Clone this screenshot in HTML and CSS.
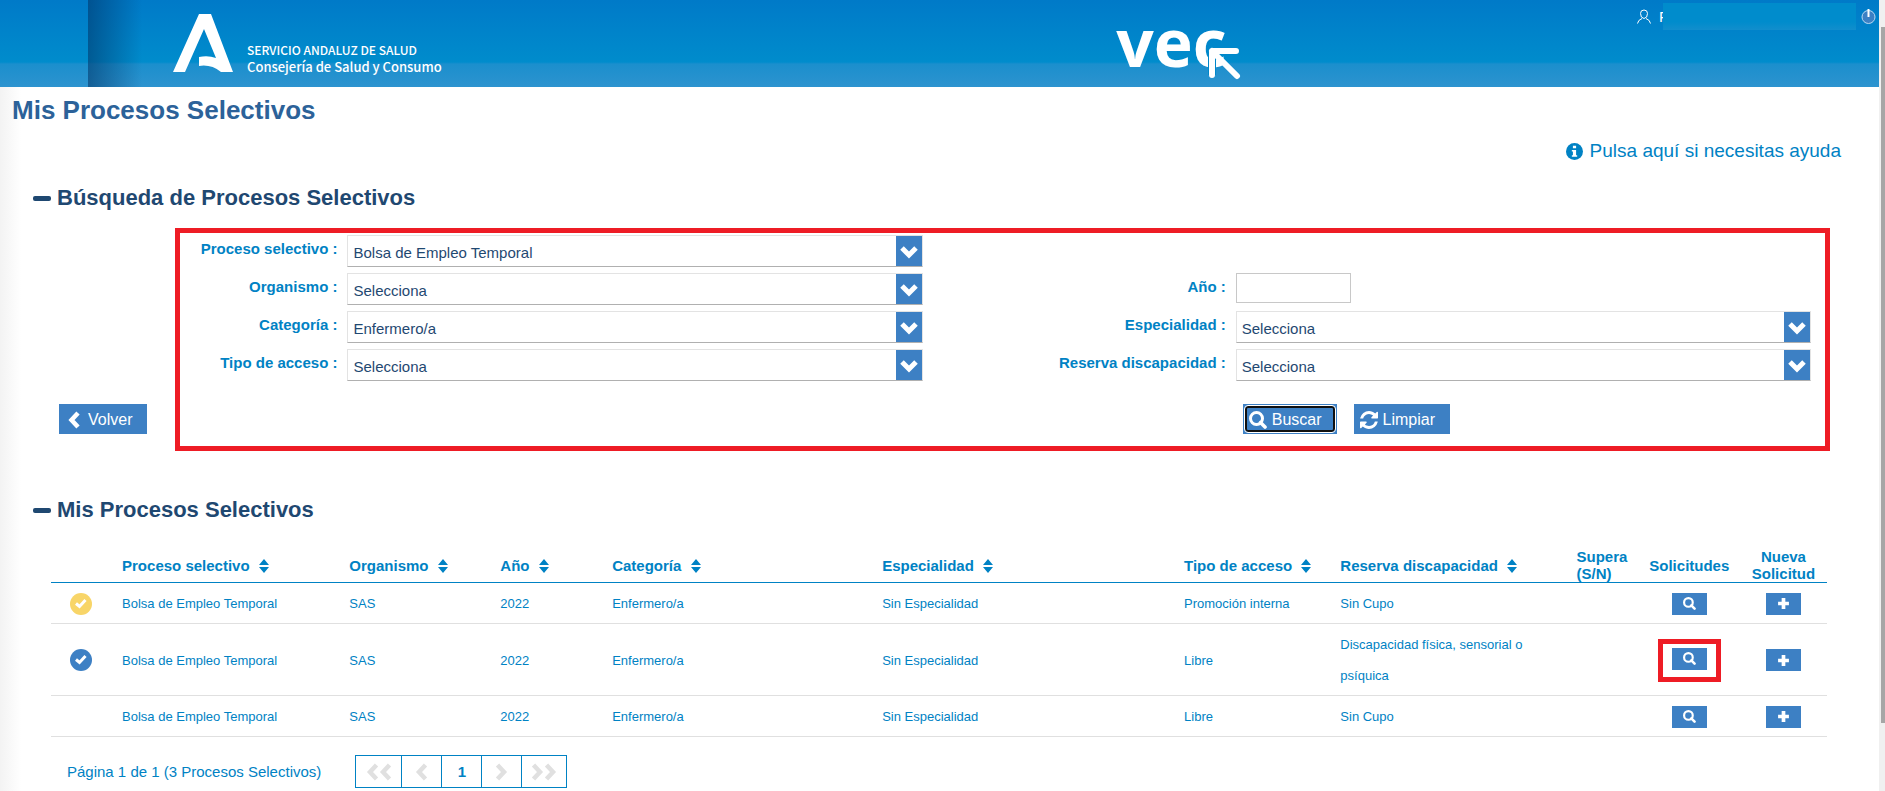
FILE: index.html
```html
<!DOCTYPE html>

<html lang="es">

<head>
  <meta charset="UTF-8">
  <meta name="viewport" content="width=device-width,initial-scale=1">
  <title>Mis Procesos Selectivos</title>
  <link rel="stylesheet" href="styles.css">
</head>
<body>
  <svg class="sprite" width="0" height="0">
    <symbol id="chevron-left" viewBox="0 0 12 18">
      <path d="M10 2 L3.500 9 L10 16" fill="none" stroke="currentColor" stroke-width="4.500"/>
    </symbol>
    <symbol id="chevron-right" viewBox="0 0 12 18">
      <path d="M2 2 L8.500 9 L2 16" fill="none" stroke="currentColor" stroke-width="4.500"/>
    </symbol>
    <symbol id="search" viewBox="0 0 18 18">
      <circle cx="7.500" cy="7.500" r="6" fill="none" stroke="currentColor" stroke-width="3"/>
      <path d="M11.500 11.500 L16 16" stroke="currentColor" stroke-width="3.600" stroke-linecap="round"/>
    </symbol>
    <symbol id="refresh" viewBox="0 0 1536 1536">
      <path fill="currentColor" d="M1511 928q0 5-1 7-64 268-268 434.500T764 1536q-146 0-282.500-55T238 1324l-129 129q-19 19-45 19t-45-19-19-45V960q0-26 19-45t45-19h448q26 0 45 19t19 45-19 45l-137 137q71 66 161 102t187 36q134 0 250-65t186-179q11-17 53-117 8-23 30-23h192q13 0 22.500 9.500t9.500 22.500zM1536 128v448q0 26-19 45t-45 19h-448q-26 0-45-19t-19-45 19-45l138-138Q969 256 768 256q-134 0-250 65T332 500q-11 17-53 117-8 23-30 23H50q-13 0-22.500-9.500T18 608v-7q65-268 270-434.500T768 0q146 0 284 55.500T1297 212l130-129q19-19 45-19t45 19 19 45z"/>
    </symbol>
    <symbol id="plus" viewBox="0 0 12 12">
      <path d="M6 1 V11 M1 6 H11" stroke="currentColor" stroke-width="3.400"/>
    </symbol>
    <symbol id="sort" viewBox="0 0 10 14">
      <path d="M5 0 L10 6 H0 Z M0 8 H10 L5 14 Z" fill="currentColor"/>
    </symbol>
    <symbol id="check" viewBox="0 0 22 22">
      <circle cx="11" cy="11" r="11" fill="currentColor"/>
      <path d="M6 10.500 L9.500 13.500 L15.500 7" fill="none" stroke="#fff" stroke-width="3"/>
    </symbol>
  </svg>

  <header class="header">
    <a class="brand" href="#">
      <svg class="brand-logo" viewBox="0 0 60 58">
        <path fill="#fff" d="M26 0 H38 L60 58 H48 Q38 50 26 52 V43 Q35 41 43 44 L31 15 L12 58 H0 Z"/>
      </svg>
      <span class="brand-text">
        <span class="brand-service">SERVICIO ANDALUZ DE SALUD</span>
        <span class="brand-council">Consejería de Salud y Consumo</span>
      </span>
    </a>
    <a class="vec" href="#">vec<svg class="vec-arrow" viewBox="0 0 34 34">
        <path d="M4 28 V4 H28" fill="none" stroke="#0087ca" stroke-width="8" stroke-linejoin="round"/>
        <path d="M4 28 V4 H28 M4 4 L29 29" fill="none" stroke="#fff" stroke-width="6" stroke-linecap="round" stroke-linejoin="round"/>
      </svg></a>
    <div class="user">
      <svg class="user-icon" viewBox="0 0 14 15" fill="none" stroke="#fff">
        <path d="M3.500 4.500 Q3.500 1 7 1 T10.500 4.500 Q10.500 9 7 9.500 Q3.500 9 3.500 4.500 Z M5 9.500 Q1 11 0.500 14.500 M9 9.500 Q13 11 13.500 14.500"/>
      </svg>
      <span class="user-name">F</span>
      <button class="power" type="button" aria-label="Salir">
        <svg viewBox="0 0 15 15" fill="none" stroke="#b9d9f2">
          <circle cx="7.500" cy="8" r="6.500" fill="#3d80c4"/>
          <path d="M7.500 0 V8" stroke="#fff" stroke-width="2"/>
        </svg>
      </button>
    </div>
  </header>

  <main class="main">
    <h1>Mis Procesos Selectivos</h1>
    <a class="help" href="#">
      <svg viewBox="0 0 16 16">
        <circle cx="8" cy="8" r="8" fill="currentColor"/>
        <path fill="#fff" d="M6.500 2.500 H9.500 V5 H6.500 Z M5.500 6.500 H9.500 V11.500 H10.500 V13 H5.500 V11.500 H6.500 V8 H5.500 Z"/>
      </svg>
      Pulsa aquí si necesitas ayuda
    </a>

    <section>
      <h2>Búsqueda de Procesos Selectivos</h2>
      <form class="search">
        <button class="btn back" type="button"><svg><use href="#chevron-left"/></svg>Volver</button>
        <div class="filters">
          <div class="fields">
            <label for="proceso">Proceso selectivo :</label>
            <select id="proceso"><option>Bolsa de Empleo Temporal</option></select>
            <span class="empty"></span>
            <label for="organismo">Organismo :</label>
            <select id="organismo"><option>Selecciona</option></select>
            <label for="anio">Año :</label>
            <input id="anio" type="text">
            <label for="categoria">Categoría :</label>
            <select id="categoria"><option>Enfermero/a</option></select>
            <label for="especialidad">Especialidad :</label>
            <select id="especialidad"><option>Selecciona</option></select>
            <label for="acceso">Tipo de acceso :</label>
            <select id="acceso"><option>Selecciona</option></select>
            <label for="reserva">Reserva discapacidad :</label>
            <select id="reserva"><option>Selecciona</option></select>
          </div>
          <div class="actions">
            <button class="btn btn-active" type="button"><svg><use href="#search"/></svg>Buscar</button>
            <button class="btn" type="button"><svg><use href="#refresh"/></svg>Limpiar</button>
          </div>
        </div>
      </form>
    </section>

    <section class="results">
      <h2>Mis Procesos Selectivos</h2>
      <table>
        <colgroup>
          <col class="c-state"><col class="c-process"><col class="c-org"><col class="c-year"><col class="c-cat">
          <col class="c-spec"><col class="c-access"><col class="c-reserve"><col class="c-pass"><col class="c-req"><col class="c-new">
        </colgroup>
        <thead>
          <tr>
            <th></th>
            <th>Proceso selectivo <svg><use href="#sort"/></svg></th>
            <th>Organismo <svg><use href="#sort"/></svg></th>
            <th>Año <svg><use href="#sort"/></svg></th>
            <th>Categoría <svg><use href="#sort"/></svg></th>
            <th>Especialidad <svg><use href="#sort"/></svg></th>
            <th>Tipo de acceso <svg><use href="#sort"/></svg></th>
            <th>Reserva discapacidad <svg><use href="#sort"/></svg></th>
            <th>Supera<br>(S/N)</th>
            <th class="center">Solicitudes</th>
            <th class="center">Nueva<br>Solicitud</th>
          </tr>
        </thead>
        <tbody>
          <tr>
            <td class="state-cell"><svg class="state state-pending"><use href="#check"/></svg></td>
            <td>Bolsa de Empleo Temporal</td>
            <td>SAS</td>
            <td>2022</td>
            <td>Enfermero/a</td>
            <td>Sin Especialidad</td>
            <td>Promoción interna</td>
            <td>Sin Cupo</td>
            <td></td>
            <td class="center"><button class="mini" type="button" aria-label="Ver solicitudes"><svg><use href="#search"/></svg></button></td>
            <td class="center"><button class="mini" type="button" aria-label="Nueva solicitud"><svg><use href="#plus"/></svg></button></td>
          </tr>
          <tr>
            <td class="state-cell"><svg class="state"><use href="#check"/></svg></td>
            <td>Bolsa de Empleo Temporal</td>
            <td>SAS</td>
            <td>2022</td>
            <td>Enfermero/a</td>
            <td>Sin Especialidad</td>
            <td>Libre</td>
            <td class="reserve-cell">Discapacidad física, sensorial o psíquica</td>
            <td></td>
            <td class="center"><span class="marked"><button class="mini" type="button" aria-label="Ver solicitudes"><svg><use href="#search"/></svg></button></span></td>
            <td class="center"><button class="mini" type="button" aria-label="Nueva solicitud"><svg><use href="#plus"/></svg></button></td>
          </tr>
          <tr>
            <td></td>
            <td>Bolsa de Empleo Temporal</td>
            <td>SAS</td>
            <td>2022</td>
            <td>Enfermero/a</td>
            <td>Sin Especialidad</td>
            <td>Libre</td>
            <td>Sin Cupo</td>
            <td></td>
            <td class="center"><button class="mini" type="button" aria-label="Ver solicitudes"><svg><use href="#search"/></svg></button></td>
            <td class="center"><button class="mini" type="button" aria-label="Nueva solicitud"><svg><use href="#plus"/></svg></button></td>
          </tr>
        </tbody>
      </table>
      <div class="pagination">
        <span>Página 1 de 1 (3 Procesos Selectivos)</span>
        <nav class="pages">
          <button class="wide" type="button" disabled aria-label="Primera"><svg><use href="#chevron-left"/></svg><svg><use href="#chevron-left"/></svg></button>
          <button type="button" disabled aria-label="Anterior"><svg><use href="#chevron-left"/></svg></button>
          <button type="button">1</button>
          <button type="button" disabled aria-label="Siguiente"><svg><use href="#chevron-right"/></svg></button>
          <button class="wide" type="button" disabled aria-label="Última"><svg><use href="#chevron-right"/></svg><svg><use href="#chevron-right"/></svg></button>
        </nav>
      </div>
    </section>
  </main>
  <div class="scrollbar"><div class="scrollbar-thumb"></div></div>
</body>
</html>
```

FILE: styles.css
```css
* {
  box-sizing: border-box;
}

html {
  overflow: hidden;
}

body {
  margin: 0;
  padding-right: 6px;
  min-height: 100vh;
  font-family: "Liberation Sans", Arial, sans-serif;
  font-size: 15px;
  color: #0082c4;
  background: #fff linear-gradient(to right, #f3f3f3, #fefefe 20px, #fff 21px);
}

button, input, select {
  font: inherit;
}

a {
  color: inherit;
  text-decoration: none;
}

.sprite {
  position: absolute;
}

/* header */
.header {
  display: grid;
  grid-template-columns: 59.4% 126px 1fr;
  height: 87px;
  color: #fff;
  background:
    linear-gradient(to right, rgba(0, 50, 100, .55), rgba(0, 80, 140, 0)) 88px 0 / 54px 100% no-repeat,
    linear-gradient(#007ac8, #008ccc 62px, #1b8fcd 64px, #2d93cf);
}

.brand {
  display: flex;
  gap: 14px;
  padding: 14px 0 0 173px;
}

.brand-logo {
  width: 60px;
  height: 58px;
}

.brand-text {
  display: flex;
  flex-direction: column;
  padding-top: 27px;
  font-family: "Noto Sans CJK JP", "Noto Sans", sans-serif;
  font-weight: 500;
  line-height: 17px;
}

.brand-service {
  font-size: 12px;
}

.brand-council {
  font-size: 13px;
}

.vec {
  position: relative;
  font-family: "Open Sans", sans-serif;
  font-size: 66px;
  font-weight: 700;
  line-height: 82px;
}

.vec-arrow {
  position: absolute;
  right: 0;
  bottom: 6px;
  width: 34px;
  height: 34px;
}

.user {
  display: flex;
  justify-content: flex-end;
  align-items: flex-start;
  padding: 3px 3px 0 0;
}

.user-icon {
  width: 14px;
  height: 15px;
  margin: 6px 8px 0 0;
}

.user-name {
  position: relative;
  width: 197px;
  height: 27px;
  line-height: 27px;
}

.user-name::after {
  content: "";
  position: absolute;
  inset: 0 0 0 4px;
  background: linear-gradient(#008ccc 70%, #128ecc);
}

.power {
  width: 15px;
  height: 15px;
  margin: 6px 0 0 5px;
  padding: 0;
  border: 0;
  background: none;
}

.power svg {
  display: block;
}

/* content */
.main {
  padding: 0 38px 0 12px;
}

h1 {
  margin: 0;
  padding-top: 8px;
  font-size: 26px;
  line-height: 30px;
  color: #2c6299;
}

.help {
  display: flex;
  justify-content: flex-end;
  align-items: center;
  gap: 7px;
  margin-top: 14px;
  font-size: 19px;
  line-height: 24px;
}

.help svg {
  width: 17px;
  height: 17px;
}

h2 {
  display: flex;
  align-items: center;
  gap: 6px;
  margin: 0;
  padding-left: 21px;
  font-size: 22px;
  line-height: 26px;
  color: #1f4871;
}

h2::before {
  content: "";
  width: 18px;
  height: 5px;
  border-radius: 2px;
  background: #1f4871;
}

section {
  margin-top: 22px;
}

.search {
  display: flex;
  align-items: flex-end;
  gap: 28px;
  margin-top: 17px;
  padding: 0 11px 0 47px;
}

.filters {
  flex: 1;
  padding: 2px 14px 12px 0;
  border: 5px solid #ee1c25;
}

.fields {
  display: grid;
  grid-template-columns: 157px 1fr 293px 1fr;
  column-gap: 10px;
  row-gap: 6px;
  align-items: start;
}

.fields label {
  font-weight: bold;
  text-align: right;
  line-height: 28px;
}

.empty {
  grid-column: span 2;
}

select {
  appearance: none;
  height: 32px;
  padding: 3px 30px 0 5px;
  border: 1px solid #e3e3e3;
  border-bottom-color: #b0b0b0;
  border-radius: 0;
  color: #1f4871;
  background:
    url("data:image/svg+xml,%3Csvg xmlns='http://www.w3.org/2000/svg' viewBox='0 0 26 30'%3E%3Cpath fill='%233d80c4' d='M0 0h26v30H0z'/%3E%3Cpath d='M6 12l7 7 7-7' fill='none' stroke='%23fff' stroke-width='5'/%3E%3C/svg%3E") right center / 26px 30px no-repeat,
    #fff;
}

input {
  width: 115px;
  height: 30px;
  border: 1px solid #c8c8c8;
}

.actions {
  display: flex;
  gap: 17px;
  margin-top: 23px;
  padding-left: calc(50% + 247px);
}

.btn {
  display: flex;
  align-items: center;
  gap: 5px;
  height: 30px;
  padding: 2px 15px 0 6px;
  border: 0;
  font-size: 16px;
  color: #fff;
  background: #3d80c4;
}

.btn svg {
  width: 18px;
  height: 18px;
}

.back {
  margin-bottom: 17px;
}

/* focus ring */
.btn-active {
  position: relative;
}

.btn-active::after {
  content: "";
  position: absolute;
  inset: 1px;
  border: 1px solid #fff;
  border-radius: 4px;
  box-shadow: inset 0 0 0 2px #101010;
}

/* results */
.results {
  margin-top: 46px;
}

table {
  width: calc(100% - 53px);
  margin: 22px 0 0 39px;
  border-collapse: collapse;
  table-layout: fixed;
}

.c-state { width: 4%; }
.c-process { width: 12.8%; }
.c-org { width: 8.5%; }
.c-year { width: 6.3%; }
.c-cat { width: 15.2%; }
.c-spec { width: 17%; }
.c-access { width: 8.8%; }
.c-reserve { width: 13.3%; }
.c-pass { width: 3.5%; }
.c-req { width: 5.7%; }
.c-new { width: 4.9%; }

th {
  height: 37px;
  padding: 3px 0 0;
  border-bottom: 1px solid #0082c4;
  text-align: left;
  line-height: 17px;
}

th svg {
  width: 10px;
  height: 14px;
  margin-left: 5px;
  vertical-align: -2px;
}

td {
  height: 41px;
  padding: 5px 0 4px;
  border-bottom: 1px solid #e0e0e0;
  font-size: 13px;
  line-height: 31px;
}

.center {
  text-align: center;
}

.state-cell {
  padding-right: 12px;
}

.reserve-cell {
  padding-right: 40px;
}

.state {
  display: block;
  width: 22px;
  height: 22px;
  margin: 0 auto;
  color: #3d80c4;
}

.state-pending {
  color: #f8d568;
}

.mini {
  display: block;
  width: 35px;
  height: 22px;
  margin: 0 auto;
  padding: 0;
  border: 0;
  color: #fff;
  background: #3d80c4;
}

.mini svg {
  display: block;
  width: 13px;
  height: 13px;
  margin: 0 auto;
}

.marked {
  display: block;
  width: 63px;
  margin: 0 auto;
  padding: 4px 0 7px;
  border: 5px solid #ee1c25;
}

.pagination {
  display: flex;
  align-items: center;
  gap: 34px;
  margin: 18px 0 0 55px;
}

.pages {
  display: flex;
  border: 1px solid #0082c4;
}

.pages button {
  display: flex;
  align-items: center;
  justify-content: center;
  width: 40px;
  height: 31px;
  padding: 0;
  border: 0;
  border-left: 1px solid #0082c4;
  font-weight: bold;
  color: #0082c4;
  background: none;
}

.pages .wide {
  width: 45px;
}

.pages button:first-child {
  border-left: 0;
}

.pages svg {
  width: 13px;
  height: 18px;
  color: #e0e0e0;
}

/* page scroll indicator */
.scrollbar {
  position: fixed;
  top: 0;
  right: 0;
  bottom: 0;
  width: 6px;
  padding: 27px 0 68px 2px;
  background: #f0f0f0;
}

.scrollbar-thumb {
  height: 100%;
  background: #a6a6a6;
}
```
